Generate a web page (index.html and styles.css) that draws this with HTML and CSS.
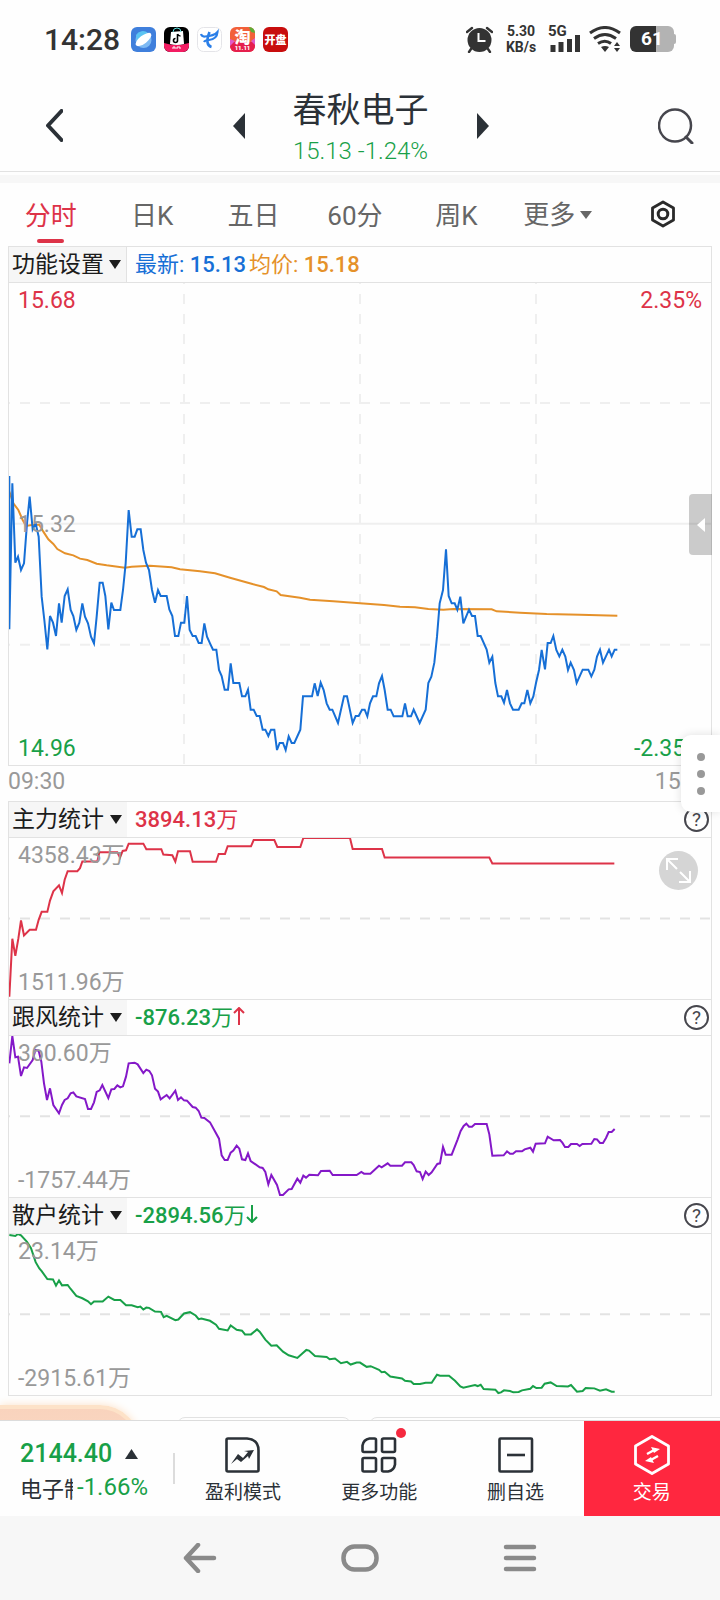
FILE: index.html
```html
<!doctype html>
<html lang="zh-CN">
    <head>
        <meta charset="UTF-8" />
        <meta name="viewport" content="width=device-width, initial-scale=1.0" />
        <title>春秋电子 分时</title>
        <link rel="stylesheet" href="styles.css">
    </head>
    <body>
        <div class="status-bar">
            <div class="status-left">
                <span class="clock">14:28</span>
                <svg class="app-icon" viewBox="0 0 25 25">
                    <rect width="25" height="25" rx="6" fill="#3f7fdc" />
                    <circle cx="12.500" cy="13" r="8" fill="#7db9f3" />
                    <path d="M5 8a8 8 0 0 1 12-2L6 15z" fill="#5cc4f2" />
                    <ellipse cx="12.500" cy="12.500" rx="9.500" ry="4" transform="rotate(-38 12.500 12.500)" fill="#fff" />
                </svg>
                <svg class="app-icon" viewBox="0 0 25 25">
                    <rect width="25" height="25" rx="6" fill="#000" />
                    <path d="M0 16q12 4 25 0v3a6 6 0 0 1-6 6H6a6 6 0 0 1-6-6z" fill="#f31c62" />
                    <path d="M7 5l12-1 1 13q-7 2-14 0z" fill="#fff" />
                    <path d="M9 5q0-4 4-4t4 4" fill="none" stroke="#5fe0e0" />
                    <path d="M13.500 7v6.500a2 2 0 1 1-2-2M13.500 7q1 2 3 2" fill="none" stroke="#000" stroke-width="1.600" />
                    <path d="M9 22v-2h2v2M13 22v-2h3v2" fill="none" stroke="#fff" />
                </svg>
                <svg class="app-icon" viewBox="0 0 25 25">
                    <rect x=".5" y=".5" width="24" height="24" rx="6" fill="#fff" stroke="#e4e4e8" />
                    <path d="M4 7q1 3 4 2.500Q17 9 20.500 5 20 12 12 13q-4 0-5 2" fill="none" stroke="#2b7fe8" stroke-width="2.200" />
                    <path d="M12.500 5q-5 13 2 15" fill="none" stroke="#2b7fe8" stroke-width="2.600" />
                </svg>
                <svg class="app-icon" viewBox="0 0 25 25">
                    <rect width="25" height="25" rx="6" fill="#f2603a" />
                    <path d="M0 15h25v4a6 6 0 0 1-6 6H6a6 6 0 0 1-6-6z" fill="#e51f4d" />
                    <path d="M19 0a6 6 0 0 1 6 6l-4-1z" fill="#5cae36" />
                    <path d="M0 12l5 2-5 5zM25 11l-4 3 4 4z" fill="#e05bc9" />
                    <text x="12.500" y="16" class="icon-text icon-text-large">淘</text>
                    <text x="12.500" y="23" class="icon-text icon-text-small">11.11</text>
                </svg>
                <svg class="app-icon" viewBox="0 0 25 25">
                    <rect width="25" height="25" rx="6" fill="#c80d0d" />
                    <text x="12.500" y="17" class="icon-text">开盘</text>
                </svg>
            </div>
            <div class="status-right">
                <svg class="alarm" viewBox="0 0 27 27">
                    <circle cx="13.500" cy="14" r="12" fill="#333" />
                    <path d="M1 6l5-4M26 6l-5-4M5 23l-2 3M22 23l2 3" stroke="#333" stroke-width="2.400" stroke-linecap="round" />
                    <path d="M12.500 7v8h7" fill="none" stroke="#fff" stroke-width="2" />
                </svg>
                <div class="net-speed">5.30<br />KB/s</div>
                <div class="signal">
                    <span>5G</span>
                    <svg viewBox="0 0 31 27">
                        <path d="M4 19v7M12 16v10M20.500 13v13M28.500 9v17" stroke="#333" stroke-width="5" />
                    </svg>
                </div>
                <svg class="wifi" viewBox="0 0 32 27">
                    <path d="M1 7q15-11 30 0M5 12.500q11-8 22 0M9 17.500q7-4.500 13 0" fill="none" stroke="#333" stroke-width="3" />
                    <path d="M12 21q4-2 8 0l-4 5zM25 20l3-4 3 4zM25 22l3 4 3-4z" fill="#333" />
                </svg>
                <div class="battery">61</div>
            </div>
        </div>

        <header class="header">
            <button class="icon-btn" aria-label="返回">
                <svg width="17" height="33" viewBox="0 0 17 33">
                    <path d="M15.500 2L2 16.500 15.500 31" fill="none" stroke="#2b3137" stroke-width="4" stroke-linecap="round" stroke-linejoin="round" />
                </svg>
            </button>
            <div class="stock-switch">
                <button class="icon-btn" aria-label="上一个">
                    <svg width="12" height="26" viewBox="0 0 12 26"><path d="M12 0v26L0 13z" fill="#2b3137" /></svg>
                </button>
                <div class="stock-title">
                    <h1>春秋电子</h1>
                    <p>15.13 -1.24%</p>
                </div>
                <button class="icon-btn" aria-label="下一个">
                    <svg width="12" height="26" viewBox="0 0 12 26"><path d="M0 0v26l12-13z" fill="#2b3137" /></svg>
                </button>
            </div>
            <button class="icon-btn" aria-label="搜索">
                <svg width="36" height="36" viewBox="0 0 36 36">
                    <circle cx="17" cy="17.500" r="16" fill="none" stroke="#46464d" stroke-width="2.500" />
                    <path d="M28 29l6 6" stroke="#46464d" stroke-width="3" stroke-linecap="round" />
                </svg>
            </button>
        </header>

        <nav class="tabs">
            <button class="tab active">分时</button>
            <button class="tab">日K</button>
            <button class="tab">五日</button>
            <button class="tab">60分</button>
            <button class="tab">周K</button>
            <div class="tab tab-more">
                <select aria-label="更多周期"><option>更多</option></select>
            </div>
            <button class="tab" aria-label="图表设置">
                <svg width="26" height="28" viewBox="0 0 26 28">
                    <path d="M13 2l10.500 6v12L13 26 2.500 20V8z" fill="none" stroke="#2a2a2a" stroke-width="2.800" stroke-linejoin="round" />
                    <circle cx="13" cy="14" r="4.800" fill="none" stroke="#2a2a2a" stroke-width="3" />
                </svg>
            </button>
        </nav>

        <main class="charts">
            <section class="panel">
                <div class="panel-head bordered">
                    <div class="picker">
                        <select aria-label="功能设置"><option>功能设置</option></select>
                    </div>
                    <div class="reading blue">最新: <b>15.13</b></div>
                    <div class="reading orange">均价: <b>15.18</b></div>
                </div>
                <div class="plot plot-main">
                    <svg viewBox="27 -531 2106 1446" preserveAspectRatio="none">
                        <g class="grid">
                            <path class="dashed" d="M27 -171H2133M27 554H2133M552 -531V915M1080 -531V915M1608 -531V915" />
                            <path d="M27 191H2133" />
                        </g>
                        <polyline class="line orange-line" points="28,95 40,130 55,150 68,180 78,198 100,194 118,194 130,215 145,238 160,252 172,267 195,280 220,286 240,296 262,300 290,311 320,316 375,323 395,320 450,317 515,322 540,328 600,334 645,340 690,353 760,373 792,381 805,388 830,394 842,405 900,413 930,419 1000,424 1080,430 1152,435 1200,440 1245,442 1285,447 1330,449 1360,447 1475,448 1490,454 1560,458 1640,462 1740,464 1852,467" />
                        <polyline class="line blue-line" points="28,48 28,508 37,70 46,308 54,290 63,330 72,310 81,190 89,110 98,208 107,190 116,230 125,410 133,480 142,568 150,468 159,488 168,528 177,430 185,488 194,408 203,388 212,450 220,468 229,510 238,488 247,430 255,470 264,490 273,530 282,550 290,470 299,368 308,368 316,408 325,508 334,428 342,450 361,450 369,390 377,310 386,150 395,230 404,230 412,208 422,208 430,270 438,308 447,330 456,390 465,428 474,390 482,408 500,408 508,448 517,468 525,528 535,528 543,488 553,488 561,408 569,510 578,528 587,528 596,549 605,549 613,490 621,530 630,550 639,569 649,569 657,630 665,648 674,689 684,689 692,610 700,669 718,669 726,709 736,709 744,689 752,749 761,749 770,768 779,768 788,809 796,809 805,828 813,809 823,809 831,870 839,849 849,849 857,870 866,829 875,849 883,849 901,809 909,709 936,709 944,670 953,708 962,668 971,690 980,730 989,749 997,749 1014,789 1032,709 1041,709 1058,789 1067,768 1076,768 1086,749 1094,749 1102,769 1110,730 1119,709 1129,709 1137,670 1146,648 1154,690 1163,749 1172,749 1181,769 1207,769 1215,730 1223,769 1233,769 1241,749 1259,789 1277,749 1285,669 1294,650 1303,608 1311,530 1319,430 1329,390 1338,268 1346,408 1355,430 1364,430 1372,449 1381,410 1390,490 1407,449 1416,468 1425,468 1433,528 1442,528 1460,569 1468,608 1477,590 1486,669 1494,709 1504,709 1512,728 1521,690 1530,730 1539,749 1556,749 1565,730 1573,730 1582,690 1591,730 1600,709 1608,669 1617,630 1625,570 1635,628 1643,549 1652,549 1660,528 1669,570 1678,589 1687,569 1696,590 1704,630 1712,608 1722,630 1730,669 1748,629 1765,629 1774,649 1783,629 1791,590 1800,569 1809,608 1827,569 1835,589 1844,569 1852,569" />
                    </svg>
                    <span class="mark top-left red">15.68</span>
                    <span class="mark top-right red">2.35%</span>
                    <span class="mark mid-left">15.32</span>
                    <span class="mark bottom-left green">14.96</span>
                    <span class="mark bottom-right green">-2.35%</span>
                    <button class="drawer-btn" aria-label="展开盘口">
                        <svg width="8" height="14" viewBox="0 0 8 14"><path d="M8 0v14L0 7z" fill="#fff" /></svg>
                    </button>
                </div>
            </section>

            <div class="time-axis">
                <span>09:30</span>
                <span>15:00</span>
                <button class="float-menu" aria-label="更多操作"><i></i><i></i><i></i></button>
            </div>

            <section class="panel">
                <div class="panel-head">
                    <div class="picker">
                        <select aria-label="指标一"><option>主力统计</option></select>
                    </div>
                    <div class="reading red"><b>3894.13</b>万</div>
                    <button class="help-btn" aria-label="主力统计说明">?</button>
                </div>
                <div class="plot">
                    <svg viewBox="27 231 2106 486" preserveAspectRatio="none">
                        <path class="dashed mid-line" d="M27 474H2133" />
                        <polyline class="line red-line" points="28,710 37,535 46,587 55,535 63,480 72,525 89,508 108,508 116,478 125,454 142,454 150,420 160,392 177,374 186,397 194,357 203,331 232,331 240,322 247,302 292,302 298,274 352,274 360,290 368,270 378,268 386,248 430,248 439,265 484,265 490,281 517,283 526,302 534,271 570,271 578,303 648,303 656,279 675,279 683,256 753,256 761,237 823,237 832,258 901,258 910,231 1050,231 1058,264 1146,264 1154,290 1468,290 1477,308 1843,308" />
                    </svg>
                    <span class="mark top-left">4358.43万</span>
                    <span class="mark bottom-left">1511.96万</span>
                    <button class="expand-btn" aria-label="全屏">
                        <svg width="39" height="39" viewBox="0 0 39 39">
                            <path d="M8 19V8h11M8 8l10 10M31 20v11H20M31 31L21 21" fill="none" stroke="#fff" stroke-width="2" />
                        </svg>
                    </button>
                </div>
            </section>

            <section class="panel">
                <div class="panel-head">
                    <div class="picker">
                        <select aria-label="指标二"><option>跟风统计</option></select>
                    </div>
                    <div class="reading green">
                        <b>-876.23</b>万<svg class="trend" viewBox="0 0 12 18"><path d="M6 18V2M1 6l5-5 5 5" stroke="#dd3348" /></svg>
                    </div>
                    <button class="help-btn" aria-label="跟风统计说明">?</button>
                </div>
                <div class="plot">
                    <svg viewBox="27 108 2106 483" preserveAspectRatio="none">
                        <path class="dashed mid-line" d="M27 349H2133" />
                        <polyline class="line purple-line" points="28,190 37,108 46,172 54,170 63,228 72,202 81,204 98,180 106,150 116,152 124,185 132,250 141,300 150,265 160,315 177,340 186,315 194,300 203,295 212,280 220,277 229,289 255,297 264,327 273,327 282,307 290,276 299,271 307,255 325,294 334,268 343,267 352,256 361,262 369,259 378,230 386,190 404,188 413,193 430,219 439,209 448,213 456,226 465,266 474,275 482,298 500,285 509,295 526,272 534,300 543,292 552,301 561,302 578,321 587,323 596,333 604,353 613,354 630,367 657,416 665,466 674,480 683,480 692,458 700,452 710,437 718,446 726,478 736,480 744,460 752,483 779,502 788,504 796,516 805,553 814,525 831,555 840,585 849,585 866,568 875,567 892,536 901,548 910,527 918,533 928,524 954,526 963,513 989,512 998,525 1070,525 1084,516 1092,521 1111,521 1137,497 1145,502 1163,490 1171,497 1206,497 1215,487 1234,487 1241,495 1250,514 1260,516 1268,537 1277,515 1286,525 1295,517 1312,492 1320,490 1329,441 1337,464 1355,464 1373,418 1382,393 1391,378 1399,371 1407,380 1416,380 1425,372 1460,372 1468,403 1477,467 1511,466 1521,454 1530,461 1539,461 1548,454 1566,454 1574,448 1591,443 1599,455 1607,431 1635,430 1643,410 1661,421 1680,420 1687,428 1695,441 1705,441 1713,432 1731,432 1739,438 1747,432 1774,431 1783,417 1791,418 1800,429 1809,429 1818,414 1826,396 1835,396 1844,387" />
                    </svg>
                    <span class="mark top-left">360.60万</span>
                    <span class="mark bottom-left">-1757.44万</span>
                </div>
            </section>

            <section class="panel last">
                <div class="panel-head">
                    <div class="picker">
                        <select aria-label="指标三"><option>散户统计</option></select>
                    </div>
                    <div class="reading green">
                        <b>-2894.56</b>万<svg class="trend" viewBox="0 0 12 18"><path d="M6 0v16M1 12l5 5 5-5" stroke="#18a048" /></svg>
                    </div>
                    <button class="help-btn" aria-label="散户统计说明">?</button>
                </div>
                <div class="plot">
                    <svg viewBox="27 702 2106 486" preserveAspectRatio="none">
                        <path class="dashed mid-line" d="M27 944H2133" />
                        <polyline class="line green-line" points="28,705 46,708 54,702 63,706 81,726 93,745 107,787 118,806 125,814 142,838 159,839 168,858 177,842 186,857 203,856 212,868 229,889 247,896 264,905 273,914 282,906 308,906 325,891 343,901 361,901 378,917 395,917 413,923 421,921 430,930 439,924 447,925 465,936 483,937 491,953 500,949 526,962 535,960 552,942 570,938 587,948 596,959 604,957 630,964 648,976 657,988 683,993 692,978 710,991 726,994 735,1005 753,1005 771,990 779,997 796,1021 814,1039 830,1038 849,1057 866,1068 892,1076 919,1052 927,1054 945,1070 980,1073 989,1080 1005,1078 1023,1092 1041,1088 1052,1096 1070,1090 1080,1090 1100,1103 1112,1101 1137,1112 1145,1119 1154,1118 1171,1132 1206,1138 1215,1145 1233,1147 1241,1155 1260,1155 1277,1151 1295,1151 1311,1127 1320,1130 1347,1130 1365,1145 1381,1162 1390,1166 1425,1158 1433,1161 1442,1157 1451,1170 1486,1172 1495,1182 1503,1180 1512,1174 1530,1176 1540,1180 1556,1179 1566,1174 1591,1169 1599,1161 1609,1167 1625,1166 1634,1154 1652,1150 1670,1161 1704,1162 1713,1158 1731,1178 1748,1176 1757,1167 1783,1168 1800,1175 1818,1171 1835,1178 1844,1178" />
                    </svg>
                    <span class="mark top-left">23.14万</span>
                    <span class="mark bottom-left">-2915.61万</span>
                </div>
            </section>
        </main>

        <!-- 下方卡片露出的上边缘 -->
        <div class="cards-peek">
            <div class="promo-card"></div>
            <div class="plain-card"></div>
            <div class="plain-card wide"></div>
        </div>

        <footer class="action-bar">
            <div class="index-info">
                <div class="index-row">
                    <span class="index-value">2144.40</span>
                    <svg width="13" height="10" viewBox="0 0 13 10"><path d="M0 10h13L6.500 0z" fill="#2b3137" /></svg>
                </div>
                <div class="index-row">
                    <span class="index-name">电子制造</span>
                    <span class="index-change">-1.66%</span>
                </div>
            </div>
            <button class="action">
                <svg viewBox="0 0 40 40">
                    <path d="M5 3.500h19q11.500 1 11.500 12V35q0 1.500-1.500 1.500H5q-1.500 0-1.500-1.500V5q0-1.500 1.500-1.500z" fill="none" stroke="#2b3137" stroke-width="2.600" />
                    <path d="M8 29l7-10 5 4 5-6-4-1 10-1-5 9-1-3-7 6-4-3z" fill="#2b3137" />
                </svg>
                盈利模式
            </button>
            <button class="action">
                <svg viewBox="0 0 40 40">
                    <path d="M10.500 3.500h5q1.500 0 1.500 1.500v10.500q0 1.500-1.500 1.500H5q-1.500 0-1.500-1.500v-5q1-6 7-7zM24.500 3.500h10q1.500 0 1.500 1.500v10.500q0 1.500-1.500 1.500h-10q-1.500 0-1.500-1.500V5q0-1.500 1.500-1.500zM5 23h10.500q1.500 0 1.500 1.500V35q0 1.500-1.500 1.500H5q-1.500 0-1.500-1.500V24.500Q3.500 23 5 23zM24.500 23h10q1.500 0 1.500 1.500v5q-1 6-7 7h-4.500q-1.500 0-1.500-1.500V24.500q0-1.500 1.500-1.500z" fill="none" stroke="#2b3137" stroke-width="2.600" />
                </svg>
                更多功能
                <i class="dot"></i>
            </button>
            <button class="action">
                <svg viewBox="0 0 40 40">
                    <rect x="3.500" y="3.500" width="32.500" height="33" rx="1" fill="none" stroke="#2b3137" stroke-width="2.600" />
                    <path d="M11 20h18" stroke="#2b3137" stroke-width="2.600" />
                </svg>
                删自选
            </button>
            <button class="action trade">
                <svg viewBox="0 0 40 40">
                    <path d="M20 1.500L36.500 11v18L20 38.500 3.500 29V11z" fill="none" stroke="#fff" stroke-width="2.800" stroke-linejoin="round" />
                    <path d="M15 19l9-5M26 21l-9 5" stroke="#fff" stroke-width="2.400" />
                    <path d="M19 12l9 2-6 4zM22 28l-9-2 6-4z" fill="#fff" />
                </svg>
                交易
            </button>
        </footer>

        <div class="system-nav">
            <button class="icon-btn" aria-label="返回键">
                <svg width="34" height="30" viewBox="0 0 34 30"><path d="M15 2L3 15l12 13M3 15h28" /></svg>
            </button>
            <button class="icon-btn" aria-label="主页键">
                <svg width="38" height="30" viewBox="0 0 38 30"><rect x="2.500" y="3.500" width="33" height="23" rx="11" /></svg>
            </button>
            <button class="icon-btn" aria-label="任务键">
                <svg width="34" height="30" viewBox="0 0 34 30"><path d="M3 4h28M3 15h28M3 26h28" /></svg>
            </button>
        </div>
    </body>
</html>
```

FILE: styles.css
```css
* {
    box-sizing: border-box;
}

body {
    font-family: Roboto, "Noto Sans CJK SC", sans-serif;
    margin: 0;
    background: #fefefe;
    color: #2b3137;
    overflow-x: hidden;
}

button,
select {
    font: inherit;
    color: inherit;
    background: none;
    border: none;
    padding: 0;
    margin: 0;
    appearance: none;
    cursor: pointer;
}

svg {
    display: block;
}

.red {
    color: #dd3348;
}

.green {
    color: #18a048;
}

.blue {
    color: #166fd6;
}

.orange {
    color: #e5912a;
}

/* Status bar */
.status-bar {
    display: flex;
    justify-content: space-between;
    align-items: center;
    height: 78px;
    padding: 0 46px 0 44px;
    color: #333;
}

.status-left {
    display: flex;
    align-items: center;
    gap: 8px;
}

.clock {
    font-size: 30px;
    font-weight: 500;
    margin-right: 3px;
}

.app-icon {
    width: 25px;
    height: 25px;
}

.icon-text {
    font-size: 11px;
    font-weight: 900;
    text-anchor: middle;
    fill: #fff;
}

.icon-text-large {
    font-size: 16px;
}

.icon-text-small {
    font-size: 6px;
}

.status-right {
    display: flex;
    align-items: center;
    gap: 9px;
}

.alarm {
    width: 27px;
    height: 27px;
}

.net-speed {
    width: 38px;
    font-size: 14px;
    line-height: 16px;
    font-weight: 700;
    text-align: center;
}

.signal {
    position: relative;
    width: 31px;
}

.signal span {
    position: absolute;
    top: -2px;
    left: -1px;
    font-size: 15px;
    line-height: 15px;
    font-weight: 700;
}

.wifi {
    width: 32px;
    height: 27px;
}

.battery {
    position: relative;
    width: 44px;
    height: 26px;
    border-radius: 6px;
    background: linear-gradient(90deg, #333 60%, #b3b3b3 60%);
    color: #fff;
    font-size: 19px;
    line-height: 26px;
    font-weight: 700;
    text-align: center;
}

.battery::after {
    content: "";
    position: absolute;
    top: 8px;
    right: -2px;
    width: 2px;
    height: 10px;
    border-radius: 0 2px 2px 0;
    background: #b3b3b3;
}

/* Header */
.header {
    display: flex;
    justify-content: space-between;
    align-items: center;
    height: 94px;
    padding: 2px 26px 0 46px;
    border-bottom: 1px solid #e2e2e2;
}

.stock-switch {
    display: flex;
    align-items: center;
    gap: 48px;
}

.stock-title {
    text-align: center;
    padding-top: 8px;
}

.stock-title h1 {
    margin: 0;
    font-size: 34px;
    line-height: 42px;
    font-weight: 400;
}

.stock-title p {
    margin: 0;
    font-size: 24px;
    line-height: 40px;
    font-weight: 300;
    color: #18a048;
}

/* Period tabs */
.tabs {
    display: flex;
    margin-top: 3px;
    padding-right: 6px;
    border-top: 8px solid #f7f7f7;
}

.tab {
    position: relative;
    display: flex;
    flex: 1;
    align-items: center;
    justify-content: center;
    height: 63px;
    padding-bottom: 2px;
    font-size: 26px;
    color: #666;
}

.tab.active {
    color: #dd3348;
}

.tab.active::after {
    content: "";
    position: absolute;
    bottom: 3px;
    width: 27px;
    height: 4px;
    border-radius: 2px;
    background: #dd3348;
}

.tab-more {
    gap: 4px;
    padding: 0 4px 0 0;
}

.tab-more::after,
.picker::after {
    content: "";
    border: 6px solid transparent;
    border-top: 8px solid #666;
    border-bottom: none;
    pointer-events: none;
}

/* Charts */
.charts {
    padding: 0 8px;
}

.panel {
    border: 1px solid #e2e2e2;
    border-bottom: none;
}

.panel.last {
    border-bottom: 1px solid #e2e2e2;
}

.panel-head {
    display: flex;
    align-items: center;
    height: 35px;
    padding-right: 2px;
}

.picker {
    display: flex;
    align-items: center;
    justify-content: space-between;
    width: 118px;
    height: 100%;
    margin-right: 8px;
    padding: 0 5px 0 3px;
    background: #f6f6f6;
    font-size: 23px;
    color: #1c1c1c;
}

.picker::after {
    border-top: 9px solid #1c1c1c;
}

.bordered .picker {
    border-right: 1px solid #e2e2e2;
}

.reading {
    margin-right: 3px;
    font-size: 22px;
    line-height: 35px;
    white-space: nowrap;
}

.reading b {
    font-weight: 500;
}

.trend {
    display: inline-block;
    width: 12px;
    height: 18px;
    fill: none;
    stroke-width: 2;
}

.help-btn {
    width: 25px;
    height: 25px;
    margin-left: auto;
    border: 2px solid #46464d;
    border-radius: 50%;
    font-size: 19px;
    line-height: 21px;
    color: #46464d;
}

.plot {
    position: relative;
    height: 162px;
    border-top: 1px solid #e2e2e2;
}

.plot-main {
    height: 483px;
}

.plot > svg {
    width: 100%;
    height: 100%;
}

.plot path,
.plot polyline {
    vector-effect: non-scaling-stroke;
}

.grid path {
    fill: none;
    stroke: #efefef;
    stroke-width: 2;
}

.mid-line {
    stroke: #e3e3e3;
    stroke-width: 2;
}

.dashed {
    stroke-dasharray: 10;
    stroke-dashoffset: 9;
}

.line {
    fill: none;
    stroke-width: 2;
}

.blue-line {
    stroke: #166fd6;
}

.orange-line {
    stroke: #e5912a;
}

.red-line {
    stroke: #dd3348;
}

.purple-line {
    stroke: #8418c8;
}

.green-line {
    stroke: #18a048;
}

.mark {
    position: absolute;
    font-size: 23px;
    line-height: 34px;
}

.mark:not(.red):not(.green) {
    color: #999;
}

.top-left {
    top: 1px;
    left: 9px;
}

.top-right {
    top: 1px;
    right: 9px;
}

.mid-left {
    top: 50%;
    left: 9px;
    margin-top: -16px;
}

.bottom-left {
    bottom: -1px;
    left: 9px;
}

.bottom-right {
    bottom: -1px;
    right: 9px;
}

.drawer-btn {
    position: absolute;
    top: 211px;
    right: -1px;
    display: flex;
    align-items: center;
    justify-content: center;
    width: 23px;
    height: 61px;
    border-radius: 4px 0 0 4px;
    background: rgba(0, 0, 0, 0.2);
}

.expand-btn {
    position: absolute;
    top: 13px;
    right: 13px;
    border-radius: 50%;
    background: #d5d5d5;
}

.time-axis {
    position: relative;
    display: flex;
    justify-content: space-between;
    height: 36px;
    border-top: 1px solid #e2e2e2;
    font-size: 23px;
    line-height: 31px;
    color: #999;
}

.float-menu {
    position: absolute;
    top: -31px;
    right: -8px;
    z-index: 1;
    display: flex;
    flex-direction: column;
    align-items: center;
    justify-content: center;
    gap: 9px;
    width: 39px;
    height: 77px;
    border-radius: 10px 0 0 10px;
    background: #fff;
    box-shadow: 0 0 10px rgba(0, 0, 0, 0.12);
}

.float-menu i {
    width: 8px;
    height: 8px;
    border-radius: 50%;
    background: #999;
}

/* Top edges of the next cards */
.cards-peek {
    display: flex;
    align-items: flex-start;
    height: 24px;
    overflow: hidden;
}

.promo-card {
    width: 140px;
    height: 80px;
    margin: 9px 37px 0 0;
    border: 4px solid #fde2c8;
    border-left: none;
    border-radius: 0 40px 0 0;
    background: linear-gradient(#f9d3bd, #fbdcc8);
    box-shadow: 0 0 8px #fde2c8;
}

.plain-card {
    width: 174px;
    height: 60px;
    margin: 21px 18px 0 0;
    border: 1px solid #e2e2e2;
    border-radius: 8px;
}

.plain-card.wide {
    flex: 1;
    margin-right: -10px;
}

/* Bottom action bar */
.action-bar {
    position: relative;
    display: flex;
    height: 96px;
    border-top: 1px solid #dcdcdc;
    background: #fefefe;
}

.index-info {
    position: relative;
    width: 175px;
    padding: 16px 0 0 20px;
}

.index-info::after {
    content: "";
    position: absolute;
    top: 32px;
    right: 0;
    width: 2px;
    height: 31px;
    background: #dcdcdc;
}

.index-row {
    display: flex;
    align-items: center;
    height: 33px;
}

.index-value {
    margin-right: 13px;
    font-size: 25px;
    font-weight: 500;
    color: #18a048;
}

.index-name {
    width: 53px;
    margin-right: 4px;
    font-size: 22px;
    white-space: nowrap;
    overflow: hidden;
}

.index-change {
    font-size: 24px;
    line-height: 24px;
    color: #18a048;
}

.action {
    position: relative;
    display: flex;
    flex: 1;
    flex-direction: column;
    align-items: center;
    padding-top: 14px;
    font-size: 19px;
    line-height: 36px;
}

.action svg {
    width: 40px;
    height: 40px;
}

.action.trade {
    background: #ff273f;
    color: #fff;
}

.dot {
    position: absolute;
    top: 7px;
    left: 50%;
    width: 10px;
    height: 10px;
    margin-left: 17px;
    border-radius: 50%;
    background: #f5293f;
}

.system-nav {
    display: grid;
    grid-template-columns: 1fr 1fr 1fr;
    height: 84px;
    padding: 0 120px;
    background: #f7f7f7;
}

.system-nav .icon-btn {
    display: flex;
    align-items: center;
    justify-content: center;
}

.system-nav svg {
    fill: none;
    stroke: #8a8a8a;
    stroke-width: 4.5;
    stroke-linecap: round;
    stroke-linejoin: round;
}
```
